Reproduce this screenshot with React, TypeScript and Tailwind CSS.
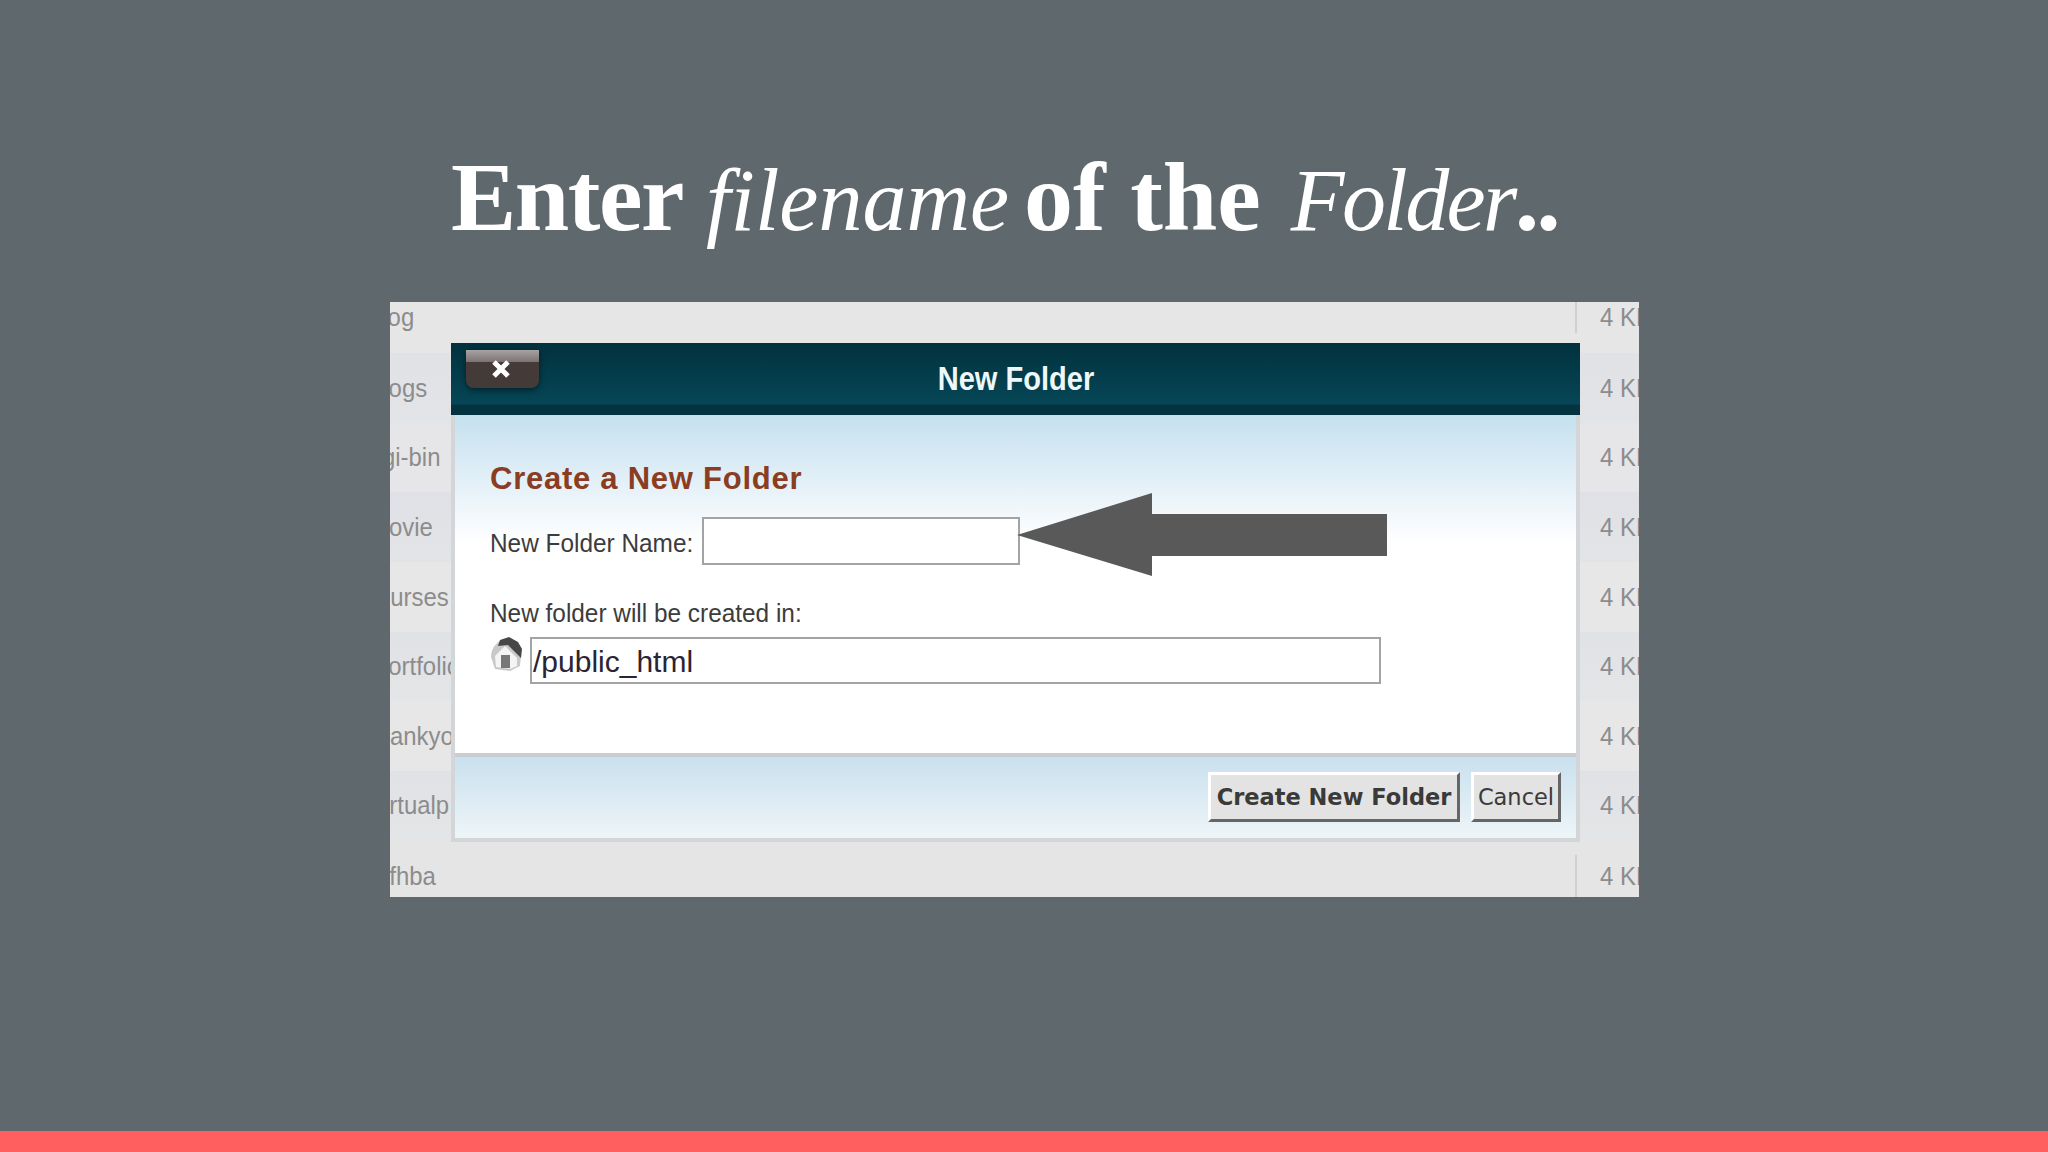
const rows = [
  { name: "blog", cls: "h-[51px] pb-[20px] bg-[#e6e6e6]", off: "-ml-[21px]" },
  { name: "blogs", cls: "h-[70px] bg-gradient-to-b from-[#e1e2e6] to-[#e3e4e7]", off: "-ml-[20px]" },
  { name: "cgi-bin", cls: "h-[69px] bg-[#e6e6e8]", off: "-ml-[20px]" },
  { name: "movie", cls: "h-[70px] bg-gradient-to-b from-[#e0e1e6] to-[#e3e4e7]", off: "-ml-[21px]" },
  { name: "courses", cls: "h-[70px] bg-[#e7e7e8]", off: "-ml-[25px]" },
  { name: "portfolio", cls: "h-[69px] bg-gradient-to-b from-[#e1e2e6] to-[#e4e5e7]", off: "-ml-[15px]" },
  { name: "thankyou", cls: "h-[70px] bg-[#e7e7e8]", off: "-ml-[20px]" },
  { name: "virtualp", cls: "h-[69px] bg-gradient-to-b from-[#e1e2e6] to-[#e4e5e7]", off: "-ml-[18px]" },
  { name: "dfhba", cls: "h-[57px] pt-[15px] bg-[#e5e5e6]", off: "-ml-[14px]" },
];

function HomeIcon() {
  return (
    <svg viewBox="0 0 32 34" className="w-[32px] h-[34px] shrink-0">
      <path d="M1 20 C1 10 8 3 16 2 C24 1 31 8 31 19 L30 29 L20 34 L5 32 Z" fill="#c9c9c9" />
      <path d="M5 19 L15 9 L27 21 L27 29 L20 32 L6 30 Z" fill="#f4f4f4" />
      <path d="M10 3 L19 0 L28 5 L32 12 L31 21 L18 8 L8 9 Z" fill="#474747" />
      <rect x="11" y="18" width="9" height="13" fill="#777777" />
    </svg>
  );
}

export default function App() {
  return (
    <div className="h-[1152px] w-[2048px] overflow-hidden bg-[#5f686d] flex flex-col font-['Liberation_Sans',sans-serif]">
      <h1 className="h-[302px] pt-[141px] pl-[451px] whitespace-nowrap text-white font-['Liberation_Serif',serif] text-[98px] leading-[112px] font-bold">
        <span className="tracking-[-1.5px]">Enter</span>
        <span className="ml-[23px] italic font-normal text-[88px]">filename</span>
        <span className="ml-[15px] tracking-[0px]">of the</span>
        <span className="ml-[30px] italic font-normal text-[88px] tracking-[-2.6px]">Folder</span>
        <span className="tracking-[-3px]">..</span>
      </h1>

      <div className="relative ml-[390px] w-[1249px] h-[595px] overflow-hidden bg-[#e5e5e5] text-[26px] text-[#8c8c8c]">
        {rows.map((r) => (
          <div key={r.name} className={`flex items-center overflow-hidden ${r.cls}`}>
            <div className="w-[1185px] shrink-0 overflow-hidden whitespace-nowrap">
              <span className={`inline-block origin-left scale-x-[0.92] ${r.off}`}>{r.name}</span>
            </div>
            <div className="flex-1 min-w-0 overflow-hidden self-stretch flex items-center border-l-2 border-[#cfd0d2] pl-[23px] whitespace-nowrap">
              <span className="inline-block origin-left scale-x-[0.92]">4 KB</span>
            </div>
          </div>
        ))}

        <div className="absolute left-[61px] top-[41px] w-[1129px] h-[499px] flex flex-col">
          <div className="relative h-[72px] shrink-0 flex items-center justify-center bg-gradient-to-b from-[#02323e] from-0% via-[#064656] via-[85%] to-[#04333f] to-[86%]">
            <button className="absolute left-[15px] top-[7px] w-[73px] h-[38px] rounded-b-[8px] bg-gradient-to-b from-[#a8a3a3] from-0% via-[#7d7373] via-[31%] to-[#443a37] to-[32%] shadow-[0_2px_6px_rgba(0,0,0,0.5)] flex items-center justify-center pr-[3px]">
              <svg viewBox="0 0 20 20" className="w-[20px] h-[20px]">
                <path d="M3 3 L17 17 M17 3 L3 17" stroke="#ffffff" strokeWidth="5" fill="none" />
              </svg>
            </button>
            <span className="inline-block scale-x-[0.88] text-[33px] font-bold text-[#eef8fa] whitespace-nowrap -mt-[1px]">New Folder</span>
          </div>

          <div className="flex-1 flex flex-col border-x-4 border-[#d3d6d9] border-b-4 bg-white">
            <div className="h-[338px] shrink-0 bg-gradient-to-b from-[#c5e0ef] from-0% to-white to-[38%] pl-[35px] pt-[46px] text-[#3c3c3c]">
              <h2 className="text-[31px] leading-[36px] font-bold text-[#8a3d22] tracking-[0.75px] whitespace-nowrap">Create a New Folder</h2>
              <div className="flex items-center mt-[20px]">
                <span className="text-[26.5px] whitespace-nowrap w-[212px] mt-[5px] inline-block origin-left scale-x-[0.92]">New Folder Name:</span>
                <div className="w-[318px] h-[48px] border-[2.5px] border-[#a3a3a3] bg-white" />
              </div>
              <div className="mt-[32px] text-[26.5px] leading-[32px] whitespace-nowrap origin-left scale-x-[0.92]">New folder will be created in:</div>
              <div className="flex items-start mt-[8px]">
                <HomeIcon />
                <div className="ml-[8px] w-[851px] h-[47px] border-[2.5px] border-[#a3a3a3] bg-white flex items-center pl-[1px] pt-[1px] text-[30px] text-[#2b2433]">/public_html</div>
              </div>
            </div>
            <div className="flex-1 flex items-start justify-end gap-[11px] border-t-4 border-[#c9cdd1] pt-[15px] pr-[15px] bg-gradient-to-b from-[#c9e0ee] to-[#eef5f8] text-[#3a3a3a]">
              <button className="w-[252px] h-[50px] bg-[#e3e3e3] border-[3.5px] border-t-white border-l-white border-r-[#666666] border-b-[#666666] font-['DejaVu_Sans',sans-serif] font-bold text-[22.5px] whitespace-nowrap flex items-center justify-center pt-[1px]">Create New Folder</button>
              <button className="w-[90px] h-[50px] bg-[#e3e3e3] border-[3.5px] border-t-white border-l-white border-r-[#666666] border-b-[#666666] font-['DejaVu_Sans',sans-serif] text-[22.5px] flex items-center justify-center pt-[1px]">Cancel</button>
            </div>
          </div>
        </div>

        <svg viewBox="0 0 370 83" className="absolute left-[627px] top-[191px] w-[370px] h-[83px]">
          <polygon points="0,42 135,0 135,21 370,21 370,63 135,63 135,83" fill="#595959" />
        </svg>
      </div>

      <div className="flex-1" />
      <div className="h-[21px] bg-[#ff5f5f]" />
    </div>
  );
}
